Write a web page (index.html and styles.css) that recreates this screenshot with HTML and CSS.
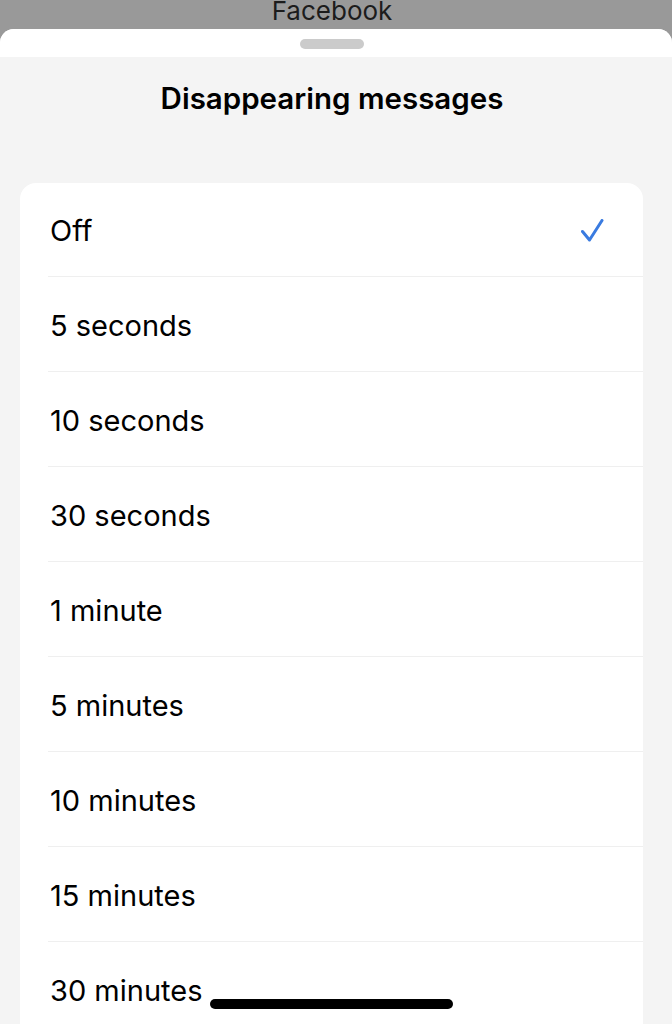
FILE: index.html
```html
<!DOCTYPE html>
<html lang="en">
<head>
<meta charset="utf-8">
<title>Disappearing messages</title>
<link rel="stylesheet" href="styles.css">
</head>
<body>
<div class="screen">
  <div class="topbar"><span class="app-name">Facebook</span></div>
  <div class="sheet">
    <div class="sheet-head"><div class="grabber"></div></div>
    <h1 class="title">Disappearing messages</h1>
    <ul class="options">
      <li class="option selected"><span class="label">Off</span>
        <svg class="check" width="24" height="24" viewBox="0 0 24 24" aria-hidden="true"><polyline points="1.5,12.5 8.5,21 21,1.5" fill="none" stroke="#3a7be0" stroke-width="3" stroke-linecap="round" stroke-linejoin="round"/></svg>
      </li>
      <li class="option"><span class="label">5 seconds</span></li>
      <li class="option"><span class="label">10 seconds</span></li>
      <li class="option"><span class="label">30 seconds</span></li>
      <li class="option"><span class="label">1 minute</span></li>
      <li class="option"><span class="label">5 minutes</span></li>
      <li class="option"><span class="label">10 minutes</span></li>
      <li class="option"><span class="label">15 minutes</span></li>
      <li class="option"><span class="label">30 minutes</span></li>
    </ul>
  </div>
  <div class="home-indicator"></div>
</div>
</body>
</html>
```

FILE: styles.css
```css
* { box-sizing: border-box; }
html, body { margin: 0; padding: 0; }
body {
  background: #999999;
  font-family: Inter, "Noto Sans", sans-serif;
  color: #000;
}
.screen {
  position: relative;
  width: 672px;
  height: 1024px;
  overflow: hidden;
}
.topbar {
  height: 29px;
  background: #999999;
  display: flex;
  justify-content: center;
  padding-right: 8px;
  overflow: hidden;
}
.app-name {
  font-size: 26px;
  line-height: 22px;
  color: #1c1c1c;
  margin-top: 0;
}
.sheet {
  background: #f4f4f4;
  border-radius: 14px 14px 0 0;
  height: 995px;
  overflow: hidden;
}
.sheet-head {
  background: #ffffff;
  height: 28px;
  display: flex;
  justify-content: center;
  padding-top: 10px;
  padding-right: 8px;
}
.grabber {
  width: 64px;
  height: 10px;
  border-radius: 5px;
  background: #cbcbcb;
}
.title {
  margin: 0;
  text-align: center;
  font-size: 29.5px;
  font-weight: 600;
  line-height: 82px;
  padding-right: 8px;
  height: 126px;
}
.options {
  list-style: none;
  margin: 0 29px 0 20px;
  padding: 0;
  background: #ffffff;
  border-radius: 16px 16px 0 0;
}
.option {
  height: 95px;
  margin-left: 28px;
  padding-left: 2px;
  padding-right: 38px;
  padding-top: 2px;
  display: flex;
  align-items: center;
  justify-content: space-between;
  border-bottom: 1px solid #efefef;
  font-size: 29px;
}
.option:first-child { height: 94px; }
.label { line-height: 1; }
.check { display: block; margin-top: 0; }
.home-indicator {
  position: absolute;
  left: 210px;
  top: 999px;
  width: 243px;
  height: 10px;
  border-radius: 5px;
  background: #000;
}
```
